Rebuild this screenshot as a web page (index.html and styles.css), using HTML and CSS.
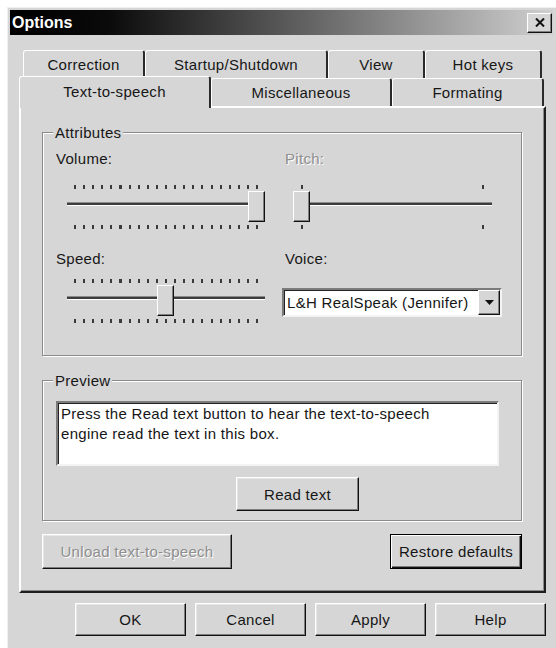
FILE: index.html
```html
<!DOCTYPE html>
<html lang="en">
<head>
    <meta charset="UTF-8">
    <title>Options</title>
    <link rel="stylesheet" href="styles.css">
</head>
<body>
    <div class="window">
        <div class="titlebar">
            <span class="title">Options</span>
            <button class="close" aria-label="Close">
                <svg width="10" height="9" viewBox="0 0 10 9"><path d="M1 0.5 L9 8.5 M9 0.5 L1 8.5" stroke="#111" stroke-width="2" fill="none"/></svg>
            </button>
        </div>

        <div class="content">
            <div class="tabstrip">
                <div class="tab-row back">
                    <div class="tab tab-correction">Correction</div>
                    <div class="tab tab-startup">Startup/Shutdown</div>
                    <div class="tab tab-view">View</div>
                    <div class="tab tab-hotkeys">Hot keys</div>
                </div>
                <div class="tab-row front">
                    <div class="tab tab-speech active">Text-to-speech</div>
                    <div class="tab tab-misc">Miscellaneous</div>
                    <div class="tab tab-format">Formating</div>
                </div>
            </div>

            <div class="page">
                <fieldset class="group attributes">
                    <legend>Attributes</legend>
                    <div class="attr-grid">
                        <div class="field">
                            <div class="label gap-wide">Volume:</div>
                            <div class="slider">
                                <div class="ticks"></div>
                                <div class="track"></div>
                                <div class="ticks bottom"></div>
                                <span class="thumb" style="left: 181px"></span>
                            </div>
                        </div>
                        <div class="field">
                            <div class="label gap-wide disabled">Pitch:</div>
                            <div class="slider pitch">
                                <div class="ticks ends"></div>
                                <div class="track"></div>
                                <div class="ticks ends bottom"></div>
                                <span class="thumb" style="left: 0px"></span>
                            </div>
                        </div>
                        <div class="field">
                            <div class="label gap-narrow">Speed:</div>
                            <div class="slider">
                                <div class="ticks"></div>
                                <div class="track"></div>
                                <div class="ticks bottom"></div>
                                <span class="thumb" style="left: 90px"></span>
                            </div>
                        </div>
                        <div class="field">
                            <div class="label gap-combo">Voice:</div>
                            <div class="combo">
                                <span class="combo-text">L&amp;H RealSpeak (Jennifer)</span>
                                <span class="combo-arrow">
                                    <svg width="9" height="5" viewBox="0 0 9 5"><path d="M0 0 H9 L4.5 5 Z" fill="#111"/></svg>
                                </span>
                            </div>
                        </div>
                    </div>
                </fieldset>

                <fieldset class="group preview">
                    <legend>Preview</legend>
                    <div class="textbox">Press the Read text button to hear the text-to-speech<br>engine read the text in this box.</div>
                    <button class="btn read-btn">Read text</button>
                </fieldset>

                <div class="page-actions">
                    <button class="btn unload-btn" disabled>Unload text-to-speech</button>
                    <button class="btn default restore-btn">Restore defaults</button>
                </div>
            </div>

            <div class="dialog-actions">
                <button class="btn">OK</button>
                <button class="btn">Cancel</button>
                <button class="btn">Apply</button>
                <button class="btn">Help</button>
            </div>
        </div>
    </div>
</body>
</html>
```

FILE: styles.css
```css
* {
    box-sizing: border-box;
}

body {
    margin: 0;
    background: #fff;
    font-family: "Liberation Sans", Arial, sans-serif;
    font-size: 15px;
    line-height: 17px;
    letter-spacing: 0.3px;
    color: #161616;
}

.window {
    width: 549px;
    height: 641px;
    margin: 7px 0 0 7px;
    padding: 3px;
    background: #d6d6d6;
    box-shadow: inset 1px 1px 0 #efefef;
}

/* title bar */
.titlebar {
    display: flex;
    align-items: center;
    justify-content: space-between;
    height: 25px;
    padding: 0 1px 0 2px;
    background: linear-gradient(90deg, #000 0%, #0a0a0a 18%, #d0d0d0 100%);
}

.title {
    color: #fff;
    font-weight: bold;
    font-size: 16px;
    letter-spacing: 0;
}

.close {
    display: flex;
    align-items: center;
    justify-content: center;
    width: 25px;
    height: 20px;
    padding: 0;
    background: #d6d6d6;
    border: 1px solid;
    border-color: #fff #111 #111 #fff;
    box-shadow: inset -1px -1px 0 #808080;
}

.content {
    padding: 15px 7px 0 9px;
}

/* tabs */
.tab-row {
    display: flex;
    height: 28px;
}

.tab-row.back {
    padding-left: 4px;
}

.tab {
    display: flex;
    align-items: center;
    justify-content: center;
    height: 100%;
    padding-bottom: 1px;
    background: #d6d6d6;
    border-top: 1px solid #fff;
    border-left: 1px solid #fff;
    border-right: 2px solid #2a2a2a;
    border-radius: 3px 3px 0 0;
}

.tab-correction { width: 122px; }
.tab-startup { width: 183px; }
.tab-view { width: 97px; }
.tab-hotkeys { width: 117px; }

.tab-speech { width: 192px; }
.tab-misc { width: 181px; }
.tab-format { width: 152px; }

.tab.active {
    position: relative;
    z-index: 1;
    height: calc(100% + 4px);
    margin-top: -2px;
    padding-bottom: 3px;
}

/* tab page */
.page {
    width: 527px;
    height: 487px;
    padding: 16px 22px 0 21px;
    border: 2px solid;
    border-color: #fff #1e1e1e #1e1e1e #fff;
    box-shadow: inset -1px -1px 0 #8a8a8a;
}

.group {
    margin: 0;
    width: 480px;
    border: 1px solid #8a8a8a;
    box-shadow: inset 1px 1px 0 #fff, 1px 1px 0 #fff;
}

.group legend {
    padding: 0 2px;
    margin-left: -3px;
    background: #d6d6d6;
    line-height: 17px;
}

.attributes {
    padding: 9px 0 32px 13px;
}

.attr-grid {
    display: grid;
    grid-template-columns: 229px 1fr;
    row-gap: 21px;
}

.label.gap-wide { margin-bottom: 18px; }
.label.gap-narrow { margin-bottom: 12px; }
.label.gap-combo { margin-bottom: 21px; }

.disabled {
    color: #8e8e8e;
    text-shadow: 1px 1px 0 #fff;
}

/* trackbar */
.slider {
    position: relative;
    display: flex;
    flex-direction: column;
    width: 198px;
    height: 44px;
    margin-left: 11px;
}

.slider.pitch {
    width: 199px;
    margin-left: 8px;
}

.ticks {
    height: 4px;
    margin: 0 7px;
    background: repeating-linear-gradient(90deg, #3a3a3a 0 2px, transparent 2px 9.1px);
}

.ticks.ends {
    margin: 0 8px;
    background:
        linear-gradient(#3a3a3a, #3a3a3a) left / 2px 100% no-repeat,
        linear-gradient(#3a3a3a, #3a3a3a) right / 2px 100% no-repeat;
}

.ticks.bottom {
    margin-top: auto;
}

.track {
    height: 4px;
    margin-top: 13px;
    background: #3c3c3c;
    border-top: 1px solid #8a8a8a;
    border-bottom: 1px solid #fff;
}

.thumb {
    position: absolute;
    top: 6px;
    width: 17px;
    height: 31px;
    background: #d6d6d6;
    border: 1px solid;
    border-color: #fff #111 #111 #fff;
    box-shadow: inset -1px -1px 0 #808080;
}

/* voice combo box */
.combo {
    display: flex;
    align-items: center;
    width: 220px;
    height: 29px;
    margin-left: -3px;
    padding: 0 0 0 3px;
    background: #fff;
    border: 2px solid;
    border-color: #7b7b7b #f4f4f4 #f4f4f4 #7b7b7b;
    box-shadow: inset 1px 1px 0 #222;
}

.combo-text {
    flex: 1;
    white-space: nowrap;
}

.combo-arrow {
    display: flex;
    align-items: center;
    justify-content: center;
    width: 22px;
    height: 25px;
    background: #d6d6d6;
    border: 1px solid;
    border-color: #fff #111 #111 #fff;
    box-shadow: inset -1px -1px 0 #808080;
}

/* preview */
.preview {
    margin-top: 16px;
    padding: 12px 0 9px 13px;
}

.textbox {
    width: 443px;
    height: 65px;
    padding: 1px 3px;
    line-height: 20px;
    background: #fff;
    border: 2px solid;
    border-color: #7b7b7b #f4f4f4 #f4f4f4 #7b7b7b;
    box-shadow: inset 1px 1px 0 #222;
}

/* buttons */
.btn {
    display: block;
    padding: 0;
    font: inherit;
    letter-spacing: inherit;
    color: inherit;
    background: #d6d6d6;
    border: 1px solid;
    border-color: #fff #111 #111 #fff;
    box-shadow: inset -1px -1px 0 #7d7d7d, inset 1px 1px 0 #e6e6e6;
}

.btn.default {
    border-color: #000;
    box-shadow: inset 1px 1px 0 #fff, inset -1px -1px 0 #111, inset -2px -2px 0 #7d7d7d;
}

.btn:disabled {
    color: #8e8e8e;
    text-shadow: 1px 1px 0 #fff;
}

.read-btn {
    width: 123px;
    height: 34px;
    margin: 11px 0 0 180px;
}

.page-actions {
    display: flex;
    justify-content: space-between;
    width: 480px;
    margin-top: 13px;
}

.unload-btn {
    width: 190px;
    height: 35px;
}

.restore-btn {
    width: 132px;
    height: 35px;
}

.dialog-actions {
    display: flex;
    justify-content: flex-end;
    gap: 9px;
    margin-top: 10px;
}

.dialog-actions .btn {
    width: 111px;
    height: 33px;
}
```
